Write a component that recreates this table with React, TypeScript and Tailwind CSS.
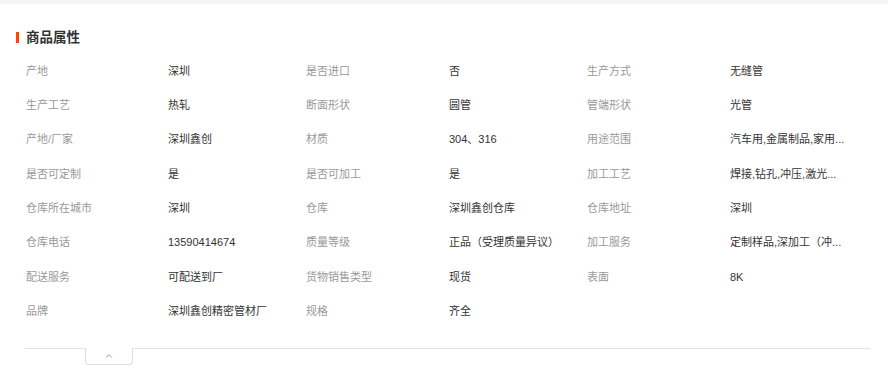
import { ChevronUp } from 'lucide-react'

const rows: [string, string][][] = [
  [['产地', '深圳'], ['是否进口', '否'], ['生产方式', '无缝管']],
  [['生产工艺', '热轧'], ['断面形状', '圆管'], ['管端形状', '光管']],
  [['产地/厂家', '深圳鑫创'], ['材质', '304、316'], ['用途范围', '汽车用,金属制品,家用...']],
  [['是否可定制', '是'], ['是否可加工', '是'], ['加工工艺', '焊接,钻孔,冲压,激光...']],
  [['仓库所在城市', '深圳'], ['仓库', '深圳鑫创仓库'], ['仓库地址', '深圳']],
  [['仓库电话', '13590414674'], ['质量等级', '正品（受理质量异议）'], ['加工服务', '定制样品,深加工（冲...']],
  [['配送服务', '可配送到厂'], ['货物销售类型', '现货'], ['表面', '8K']],
  [['品牌', '深圳鑫创精密管材厂'], ['规格', '齐全']],
]

export default function App() {
  return (
    <div
      className="w-[888px] h-[377px] bg-white overflow-hidden"
      style={{ fontFamily: '"Liberation Sans", Arial, "Noto Sans CJK SC", sans-serif' }}
    >
      <div className="h-[4px] bg-[#f5f5f5]" />
      <div className="mt-[28px] pl-[16px] flex items-center h-[11px]">
        <div className="w-[3px] h-[11px] bg-[#ff4400]" />
        <h2 className="ml-[7px] text-[13.5px] font-bold text-[#333] leading-none">商品属性</h2>
      </div>
      <div className="mt-[11px] pl-[26px]">
        {rows.map((row, i) => (
          <div
            key={i}
            className="grid grid-cols-[142px_138px_143px_138px_143px_1fr] h-[34.3px] items-center text-[11px]"
          >
            {row.map(([k, v]) => (
              <>
                <div key={k} className="text-[#999] whitespace-nowrap">{k}</div>
                <div key={k + 'v'} className="text-[#333] whitespace-nowrap">
                  {v}
                </div>
              </>
            ))}
          </div>
        ))}
      </div>
      <div className="mt-[20px] ml-[25px] mr-[18px] border-t border-[#e3e3e3]">
        <div className="ml-[60px] -mt-px w-[48px] h-[17px] border border-t-0 border-[#dcdcdc] rounded-b-[4px] bg-white flex items-center justify-center">
          <ChevronUp size={10} strokeWidth={2} className="text-[#888]" />
        </div>
      </div>
    </div>
  )
}
